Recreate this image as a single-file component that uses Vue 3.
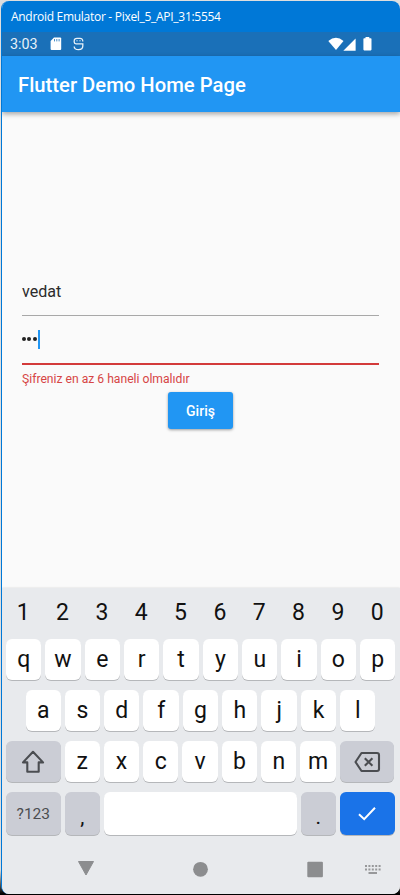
<script setup>
const digits = '1234567890'.split('')
const rowOne = 'qwertyuiop'.split('')
const rowTwo = 'asdfghjkl'.split('')
const rowThree = 'zxcvbnm'.split('')
</script>

<template>
  <div class="desktop">
    <div class="window">
      <header class="titlebar"><span class="title-text">Android Emulator - Pixel_5_API_31:5554</span></header>

      <div class="statusbar">
        <span class="clock">3:03</span>
        <svg class="sd" width="12" height="14" viewBox="0 0 12 14">
          <path d="M4 .5h6.2q1 0 1 1v10.6q0 1-1 1H1.6q-1 0-1-1V4z" fill="#fff" />
          <path d="M4.5 2v2.4M6.8 2v2.4M9.1 2v2.4" stroke="#1a70b8" stroke-width=".8" />
        </svg>
        <svg class="agent" width="12" height="14" viewBox="0 0 12 14" fill="none" stroke="#e8f1f9" stroke-width="1.3">
          <path d="M9.8 4.4Q9.8 1.3 7 1.3H4Q1.2 1.3 1.2 4.2V5Q1.2 6.8 3 6.8H9.8V9Q9.8 12.6 5.5 12.6Q1.2 12.6 1.2 9.4" />
          <path d="M3.4 3.8h1.2M6.4 3.8h1.2" stroke-width="1" />
        </svg>
        <span class="spacer"></span>
        <svg class="wifi" width="16" height="14" viewBox="0 0 16 14"><path d="M.3 4Q8-2.4 15.5 4L8 13z" fill="#fff" /></svg>
        <svg class="cell" width="13" height="13" viewBox="0 0 13 13"><path d="M12.6.4v12.3H.3z" fill="#fff" /></svg>
        <svg class="battery" width="9" height="14" viewBox="0 0 9 14"><path d="M2.5 0h3.8v1.2h1.4q.8 0 .8.8v10.6q0 .8-.8.8H1.2q-.8 0-.8-.8V2q0-.8.8-.8h1.3z" fill="#fff" /></svg>
      </div>

      <div class="appbar"><h1>Flutter Demo Home Page</h1></div>

      <main class="content">
        <div class="field"><span>vedat</span></div>
        <div class="field invalid">
          <i v-for="n in 3" :key="n" class="dot"></i><i class="caret"></i>
        </div>
        <p class="error">Şifreniz en az 6 haneli olmalıdır</p>
        <button class="submit">Giriş</button>
      </main>

      <section class="keyboard">
        <div class="row digits"><span v-for="k in digits" :key="k">{{ k }}</span></div>
        <div class="row first"><span v-for="k in rowOne" :key="k" class="key">{{ k }}</span></div>
        <div class="row second"><span v-for="k in rowTwo" :key="k" class="key">{{ k }}</span></div>
        <div class="row third">
          <span class="key wide">
            <svg width="24" height="24" viewBox="0 0 24 24" fill="none" stroke="#4b4d51" stroke-width="2.1" stroke-linejoin="round"><path d="M12 1.8 22 12.4H17.7V21.8H6.3V12.4H2z" /></svg>
          </span>
          <span v-for="k in rowThree" :key="k" class="key">{{ k }}</span>
          <span class="key wide">
            <svg width="28" height="22" viewBox="0 0 28 22" fill="none" stroke="#4b4d51" stroke-width="2.1" stroke-linejoin="round"><path d="M8.5 2H24q2 0 2 2V18q0 2-2 2H8.5L2.5 11z" /><path d="m11.8 7.2 7.6 7.6m0-7.6-7.6 7.6" /></svg>
          </span>
        </div>
        <div class="row fourth">
          <span class="key wide symbols">?123</span>
          <span class="key muted">,</span>
          <span class="key space"></span>
          <span class="key muted">.</span>
          <span class="key wide enter">
            <svg width="20" height="16" viewBox="0 0 20 16" fill="none" stroke="#fff" stroke-width="2"><path d="m2 8.2 5.2 5L18 1.8" /></svg>
          </span>
        </div>
        <nav class="navbar">
          <svg width="398" height="30" viewBox="0 0 398 30">
            <path d="M76.5 6.5H91.5L84 20z" fill="#8c8d8f" stroke="#8c8d8f" stroke-linejoin="round" />
            <circle cx="198.5" cy="14.3" r="7.4" fill="#8c8d8f" />
            <rect x="305.3" y="6.8" width="15.6" height="15.4" rx="1" fill="#8c8d8f" />
            <g stroke="#97989a" stroke-width="1.8" fill="none">
              <path d="M363 11h16M363 14.5h16" stroke-dasharray="2 1.4" />
              <path d="M366.5 18h8.5" />
            </g>
          </svg>
        </nav>
      </section>
    </div>
  </div>
</template>

<style>
body { background: #000; }
</style>

<style scoped>
* { box-sizing: border-box; }
.desktop {
  height: 895px;
  padding: 1px 0 1px 1px;
  background: linear-gradient(#dedede 0 870px, #000 894px);
  font-family: Roboto, sans-serif;
}
.window {
  display: flex;
  flex-direction: column;
  height: 893px;
  border-left: 1px solid #0078d7;
  border-radius: 8px;
  overflow: hidden;
  background: #fafafa;
}
.titlebar {
  flex: none;
  height: 31px;
  padding-left: 9px;
  background: #0078d7;
  color: #fff;
  font: 12px/31px "Open Sans", "Noto Sans", sans-serif;
  white-space: nowrap;
}
.title-text { letter-spacing: -0.29px; }
.statusbar {
  flex: none;
  display: flex;
  align-items: center;
  height: 24px;
  padding: 0 28px 0 8px;
  background: #1a70b8;
}
.clock { width: 40px; color: #e8f1f9; font-size: 14.3px; line-height: 24px; }
.agent { margin-left: 11px; }
.spacer { flex: 1; }
.cell { margin: 0 1px 0 -.5px; }
.battery { margin-left: 6px; }
.appbar {
  flex: none;
  position: relative;
  height: 56px;
  padding-left: 16px;
  background: #2196f3;
  box-shadow: 0 2px 5px rgba(0, 0, 0, .35);
}
h1 { margin: 0; color: #fff; font-size: 20.25px; font-weight: 500; line-height: 58px; }
.content {
  flex: 1;
  display: flex;
  flex-direction: column;
  padding: 155px 21px 0 20px;
}
.field {
  display: flex;
  align-items: center;
  height: 49px;
  border-bottom: 1px solid #a8a8a8;
  color: #2b2b2b;
  font-size: 16.1px;
}
.invalid { height: 49px; padding-bottom: 1px; border-bottom: 2px solid #d33a3a; }
.dot { width: 4px; height: 4px; margin: 0 1.2px 0 .3px; border-radius: 50%; background: #222; }
.dot + .dot { margin-left: 0; }
.caret { width: 2px; height: 19px; background: #2196f3; }
.error { margin: 6px 0 0; color: #d64545; font-size: 12.15px; line-height: 16px; }
.submit {
  align-self: center;
  width: 65px;
  height: 37px;
  margin-top: 5px;
  padding: 0;
  border: 0;
  border-radius: 3px;
  background: #2196f3;
  box-shadow: 0 1px 3px rgba(0, 0, 0, .38);
  color: #fff;
  font: 500 14px Roboto, sans-serif;
}
.keyboard {
  flex: none;
  height: 306px;
  padding: 4px 4px 0;
  background: #e8eaed;
  box-shadow: 0 0 2px rgba(0, 0, 0, .15);
  color: #111;
}
.row { display: flex; gap: 4px; width: 389.5px; font-size: 23px; }
.digits { width: 389.5px; height: 47.4px; margin-left: -.5px; line-height: 41px; }
.digits span { flex: 1; text-align: center; }
.key {
  flex: 1;
  display: flex;
  align-items: center;
  justify-content: center;
  height: 41px;
  border-radius: 6px;
  background: #fff;
  box-shadow: 0 1px 0 #b5b7ba;
}
.first, .second, .third { height: 51px; }
.second { padding: 0 20px 0 19.5px; }
.third .key, .fourth .key { flex: none; width: 35.3px; }
.third .wide, .fourth .wide { width: 54.6px; }
.third .wide { padding-top: 1px; }
.third .wide, .muted, .symbols { background: #cbcdd5 !important; }
.fourth { height: 56px; }
.fourth .key { height: 42.6px; }
.fourth .space { width: 192.8px; }
.fourth .muted { padding-top: 6px; font-size: 21px; }
.symbols { color: #4b4d51; font-size: 15.5px; }
.fourth .enter { background: #1a73e8; }
.navbar { height: 30px; margin: 7px -4px 0; }
.navbar svg { display: block; }
</style>
